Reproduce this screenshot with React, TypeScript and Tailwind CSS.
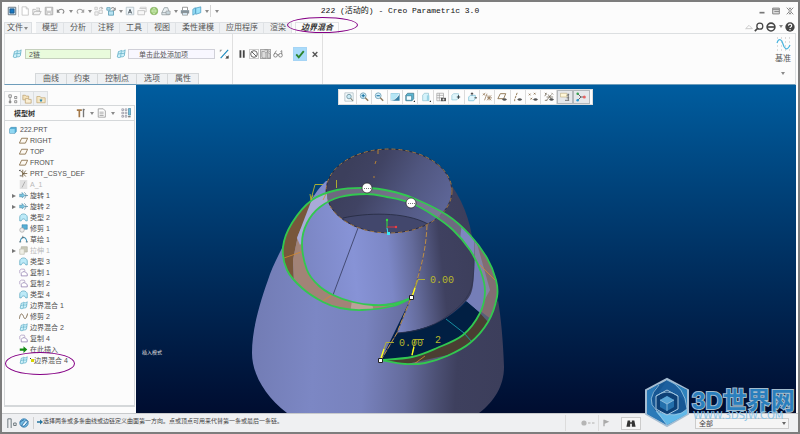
import type { ReactNode } from "react";

type Point = [number, number];

interface TreeNode {
    icon: string;
    label: string;
    expandable?: boolean;
    disabled?: boolean;
    marker?: boolean;
}

const ribbonTabs = ["模型", "分析", "注释", "工具", "视图", "柔性建模", "应用程序", "渲染"];
const panelTabs = ["曲线", "约束", "控制点", "选项", "属性"];

const treeNodes: TreeNode[] = [
    { icon: "plane", label: "RIGHT" },
    { icon: "plane", label: "TOP" },
    { icon: "plane", label: "FRONT" },
    { icon: "csys", label: "PRT_CSYS_DEF" },
    { icon: "axis", label: "A_1", disabled: true },
    { icon: "revolve", label: "旋转 1", expandable: true },
    { icon: "revolve", label: "旋转 2", expandable: true },
    { icon: "quilt", label: "类型 2" },
    { icon: "trim", label: "修剪 1" },
    { icon: "sketch", label: "草绘 1" },
    { icon: "extrude", label: "拉伸 1", expandable: true, disabled: true },
    { icon: "quilt", label: "类型 3" },
    { icon: "copy", label: "复制 1" },
    { icon: "copy", label: "复制 2" },
    { icon: "quilt", label: "类型 4" },
    { icon: "blend", label: "边界混合 1" },
    { icon: "curve", label: "修剪 2" },
    { icon: "blend", label: "边界混合 2" },
    { icon: "copy", label: "复制 4" },
    { icon: "insert", label: "在此插入" },
    { icon: "blend", label: "边界混合 4", marker: true },
];

// every glyph is drawn on a 12 x 12 grid
const glyphs: Record<string, ReactNode> = {
    app: <><path d="M1.500 1.500h9v9h-9z" fill="#cfe8f7" stroke="#5a6570" /><path d="M3.500 3.500h5v5h-5z" fill="#1978c2" stroke="#164e80" /></>,
    new: <path d="M2.500 1h5l2.500 2.500V11h-7.500zM7.500 1v2.500H10" fill="#fff" stroke="#c2c2c2" />,
    open: <><path d="M1 10.500V4h3l1 1h4v2M1 10.500l2-4h8l-2 4z" fill="#f4f4f4" stroke="#b5b5b5" /><path d="M5 2.500h4v2" stroke="#b5b5b5" /></>,
    save: <><path d="M1.500 1.500h9v9h-9z" fill="#d9d9d9" stroke="#a8a8a8" /><path d="M3 2h6v4H3zM4 8h4v2.500H4z" fill="#fff" stroke="#b0b0b0" strokeWidth=".6" /></>,
    undo: <><path d="M2.500 6C4 3 9 3 9.500 6.500c0 1.500-.8 2-1.500 2.500" stroke="#888" strokeWidth="1.300" /><path d="M1 3.500V8h4z" fill="#888" /></>,
    redo: <><path d="M9.500 6C8 3 3 3 2.500 6.500c0 1.500.8 2 1.500 2.500" stroke="#a5a5a5" strokeWidth="1.300" /><path d="M11 3.500V8H7z" fill="#a5a5a5" /></>,
    regen: <><path d="M1 1.500h3v3H1zM1 7h4v4H1zM6 5h4v4H6z" fill="#f2f2f2" stroke="#c5c5c5" /><path d="M6 3c2-2 4-1 4 0M9 1l1.500 2-2 .5" stroke="#aaa" /></>,
    regenBlue: <><path d="M1 2h4v3H1zM3 6h6v5H3z" fill="#b9e2f2" stroke="#5c9db5" /><path d="M6 3c2-2 4-1 4.500 1M11 2v3H8" stroke="#666" /></>,
    annot: <><path d="M1.500 1.500h9v9h-9z" fill="#eef5f9" stroke="#b5c2c9" /><path d="M4 9l2-5 2 5M5 7.500h2" stroke="#36424a" /></>,
    windows: <><path d="M3 3h8v4H9M1 5.500h8v5H1z" fill="#f7f7f7" stroke="#c2c2c2" /><path d="M4 3V1.500h7V3" stroke="#ccc" /></>,
    globe: <><circle cx="6" cy="6" r="4.500" fill="#9ccc74" stroke="#85ae62" /><path d="M2 6h8M6 2c-2 2-2 6 0 8M6 2c2 2 2 6 0 8" stroke="#dff3cf" strokeWidth=".7" /></>,
    stack: <><path d="M1 8l3-6h4l2 6zM1 8v2.500h9V8" fill="#eaf1f3" stroke="#939ca0" /><path d="M6 6h5v4H6z" fill="#c7d6dc" stroke="#888" strokeWidth=".6" /></>,
    print: <><path d="M3 5V1.500h6V5" fill="#fff" stroke="#888" /><path d="M1 5h10v4H1z" fill="#84929a" /><path d="M3 8h6v3H3z" fill="#dceffa" stroke="#777" strokeWidth=".7" /></>,
    model: <path d="M1 4l3-2v7l-3 2zM4.500 2.500L10.500 1v7l-6 2z" fill="#9be2fa" stroke="#3c93bb" strokeWidth=".8" />,
    blend: <><path d="M3 3c2 0 3-2 4-1s3 0 4-1l-1 7c-1 2-3 1-4 1.500S3 11 1.500 9.500z" fill="#cdf0f9" stroke="#57a9c3" strokeWidth=".9" /><path d="M2.500 6c2 0 3-1 4-.6s3 0 4-.6M6.500 2L5.500 9.500" stroke="#57a9c3" strokeWidth=".8" /></>,
    flip: <><path d="M2 11L11 1" stroke="#1687bd" strokeWidth="1.300" /><path d="M1 1h3L1 4z" fill="#999" /><path d="M11.500 7.500v4h-4z" fill="#222" /><path d="M8 8l3 3" stroke="#555" strokeWidth=".8" /></>,
    pause: <path d="M3 1.500h2.200v9H3zM7 1.500h2.200v9H7z" fill="#444" />,
    block: <><circle cx="6" cy="6" r="4" stroke="#666" strokeWidth="1.200" /><path d="M3 3l6 6" stroke="#666" strokeWidth="1.200" /></>,
    mesh: <path d="M1 9V3h3l2 2v6H2zM4 1h4v3M8 4l3 2v5H8zM6 5L9 2l2 2" stroke="#888" strokeWidth=".8" />,
    glasses: <><circle cx="3" cy="7.500" r="2.200" stroke="#777" /><circle cx="9" cy="7.500" r="2.200" stroke="#777" /><path d="M5 7h2M1.500 6L4 2M10.500 6V2L9 3" stroke="#777" /></>,
    check: <path d="M1.500 6.500L4.500 10 10.500 2.500" stroke="#2c852c" strokeWidth="2.200" />,
    cross: <path d="M2.500 3l7 7M9.500 3l-7 7" stroke="#555" strokeWidth="2" />,
    plane: <path d="M3.500 3h8l-3 6.500h-8z" fill="#fdf9f2" stroke="#8d7450" strokeWidth="1.200" />,
    csys: <><path d="M2 2l7 8M9 2l-6 8M5 1v10M5 6h6" stroke="#705d3e" strokeWidth="1.100" /><path d="M0 1l2 2M0 3l2-2M1 9h2" stroke="#444" /></>,
    axis: <><path d="M1 0h10v12H1z" fill="#e2e2e2" /><path d="M4 10l4-8" stroke="#aaa" strokeWidth="1.200" /></>,
    revolve: <><path d="M1 4l3 1V2l4 4-4 3V7L1 8z" fill="#7cc8e4" stroke="#4a8dab" strokeWidth=".8" /><path d="M7 2c3 1 3 6 0 8M8 6h4" stroke="#5a8ba0" /></>,
    quilt: <path d="M1 10.500V5C2 0 10 0 11 5v5.500H9C8 7 4 7 3 10.500z" fill="#bdeaf8" stroke="#519fbb" strokeWidth=".9" />,
    trim: <><path d="M4 1h7v6H4z" fill="#57afd5" stroke="#2b7fa7" strokeWidth=".7" /><circle cx="4" cy="8" r="3" fill="#eee" stroke="#999" strokeWidth=".8" /></>,
    sketch: <><path d="M1.500 10C2 1 10 1 10.500 10" stroke="#3d93ba" strokeWidth="1.400" /><path d="M0 9h3M9 9h3M4 3h3M5 1v4" stroke="#666" strokeWidth=".8" /></>,
    extrude: <><path d="M3 1h8v7H3z" fill="#c9c9b8" stroke="#b4b4a6" /><path d="M1 4h6v7H1z" fill="#efefe6" stroke="#c0c0b4" /></>,
    copy: <><path d="M1 7V3l2-1.500h4L8 4" stroke="#ab9bc2" /><path d="M3 10.500V7l2-2h3l3 2.500v3z" fill="#fff" stroke="#8c79ab" /></>,
    curve: <path d="M.5 9C2-1 5 3 6 6s3 6 5.500-4" stroke="#806b50" strokeWidth="1.300" />,
    insert: <path d="M1 4.500h5V1.500L11 6 6 10.500v-3H1z" fill="#138a13" />,
    part: <><path d="M1 4l2-2h8v6l-2 3H1z" fill="#55aed6" stroke="#277ba6" strokeWidth=".7" /><path d="M1.500 4.500h7v6h-7z" fill="#90d7f2" /></>,
    treeTab: <path d="M1 1h3v3H1zM8 3h2.500v2.500H8zM8 8h2.500v2.500H8zM2.500 4v7M1.500 8.500h2v2h-2z" stroke="#666" strokeWidth=".8" />,
    folders: <><path d="M1 3V1.500h3l1 1h3V7H1z" fill="#f4e2bc" stroke="#b89c68" strokeWidth=".8" /><path d="M4 5.500h3l1 1h3V11H4z" fill="#faefd5" stroke="#b89c68" strokeWidth=".8" /></>,
    favorite: <><path d="M1 10.500V3h4l1 1.500h5v6z" fill="#f6e7c5" stroke="#c0a46d" strokeWidth=".8" /><path d="M6 5.500l.7 1.300 1.300.2-1 1 .2 1.400L6 8.800l-1.200.6L5 8 4 7l1.300-.2z" fill="#2485b1" /></>,
    tools: <><path d="M1 1.500h6v2H5V11H3V3.500H1z" fill="#a37848" /><path d="M9 1v10M8 2h2.500" stroke="#777" strokeWidth="1.600" /></>,
    list: <><path d="M1.500 1h6L10 3.500V11H1.500z" fill="#fff" stroke="#999" /><path d="M3 5h5M3 7h5M3 9h5" stroke="#888" strokeWidth=".8" /></>,
    columns: <><path d="M1 1h2v2H1zM1 5h2v2H1zM1 9h2v2H1zM5 1h2v2H5zM5 5h2v2H5zM5 9h2v2H5z" stroke="#778" strokeWidth=".7" /><path d="M9 .5h2.500v8H9z" fill="#75bfdd" stroke="#377791" strokeWidth=".7" /><path d="M8.500 10.500h3" stroke="#333" /></>,
    fit: <><path d="M1 1h10v10H1z" fill="#f4fafc" stroke="#99abb2" strokeWidth=".7" /><circle cx="6" cy="5.500" r="2.700" fill="#cbeaf5" stroke="#6d909d" /><path d="M8 7.500l2.500 3" stroke="#776" strokeWidth="1.300" /></>,
    zoomIn: <><circle cx="5" cy="4.500" r="3.500" fill="#d6effa" stroke="#6d9fb5" /><path d="M3 4.500h4M5 2.500v4" stroke="#08699c" strokeWidth="1.200" /><path d="M7.500 7L11 10.500" stroke="#8c7a5e" strokeWidth="1.700" /></>,
    zoomOut: <><circle cx="5" cy="4.500" r="3.500" fill="#d6effa" stroke="#6d9fb5" /><path d="M3 4.500h4" stroke="#08699c" strokeWidth="1.200" /><path d="M7.500 7L11 10.500" stroke="#8c7a5e" strokeWidth="1.700" /></>,
    repaint: <><path d="M1 1.500h10.500v9H1z" fill="#3580a5" /><path d="M1 1.500h10.500C10 6 6 9 1 10z" fill="#b4e6f5" /><path d="M1 10c4 0 8-3 10-8" stroke="#fff" /></>,
    shade: <><path d="M1 4l2-2.500h7.500V8l-2 2.500H1z" fill="#5eb6d2" stroke="#3a6e81" strokeWidth=".8" /><path d="M1.500 4.500h6.500v5.500H1.500z" fill="#f1fcff" stroke="#2b7793" strokeWidth=".8" /><path d="M12 10v2h-2z" fill="#222" /></>,
    saved: <><path d="M2 4l2-2.500h5V8l-2 2.500H2z" fill="#d5f3fb" stroke="#8cbccb" strokeWidth=".8" /><path d="M7 4h3v7H7z" fill="#9ad4e5" /><path d="M12 10v2h-2z" fill="#222" /></>,
    views: <><path d="M1 1.500h8v9H1zM1 4h8M1 7h8M4 1.500v9" fill="#fff" stroke="#999" strokeWidth=".8" /><path d="M6 7h6v4H6z" fill="#555" /><circle cx="9" cy="9" r="1.100" fill="#ddd" /></>,
    box: <><path d="M1 4l2-2h6v5L7 9.500H1z" fill="#dff5fb" stroke="#8fc4d3" strokeWidth=".8" /><path d="M7 6h4M9 4v4" stroke="#36454b" strokeWidth="1.300" /></>,
    boxUp: <><path d="M2 6l2-2h6v4L8 10.500H2z" fill="#dff5fb" stroke="#6ab7d0" strokeWidth=".8" /><path d="M6 1v3M4.500 2.500L6 1l1.500 1.500M9 7h3" stroke="#333" strokeWidth="1.100" /></>,
    datum: <path d="M1 2l3 2M4 1L1 4M3 10l3-8M6 4l5 6M11 4l-5 6M6 7h6M8.500 4v6" stroke="#937856" strokeWidth=".9" />,
    planeEye: <><path d="M4 2h6.500L8 8H1z" stroke="#8d7450" strokeWidth="1.100" /><path d="M6 9q3-3 6 0-3 3-6 0z" fill="#555" /></>,
    axisEye: <><path d="M5 1L2 9M2 9v2" stroke="#8d7450" strokeWidth="1.100" strokeDasharray="3 1" /><path d="M5 9q3-3 6 0-3 3-6 0z" fill="#555" /></>,
    pointEye: <><path d="M1 2l2 2M3 2L1 4M7 1l2 2M9 1L7 3M3 7l2 2M5 7L3 9" stroke="#8d7450" /><path d="M6 9q3-3 6 0-3 3-6 0z" fill="#555" /></>,
    csysEye: <><path d="M1 1l2 2M3 1L1 5M5 3l4 6M9 3L3 10M3 6h8M9 1l2 2M1 10h3" stroke="#6d6353" strokeWidth=".9" /><path d="M6 9q3-3 6 0-3 3-6 0z" fill="#555" /></>,
    note: <><path d="M.5 1.500h8v4.500h-8z" fill="#fff7d8" stroke="#baa978" strokeWidth=".7" /><path d="M10 2v8M8 4l3-1M8 7h3M6 10h5" stroke="#666" /></>,
    spin: <><path d="M2 2l4 4-4 4M6 6h4" stroke="#666" strokeWidth="1.200" /><circle cx="2" cy="2" r="1.500" fill="#36a04e" /><circle cx="2" cy="10" r="1.500" fill="#2a9ad1" /><circle cx="10" cy="6" r="1.800" fill="#e86262" /></>,
    minimize: <path d="M3 8h6" stroke="#777" strokeWidth="2" />,
    maximize: <path d="M2 2.500h8v7H2zM2 4h8M4 6.500h6" fill="#ddd" stroke="#888" strokeWidth="1.200" />,
    close: <path d="M2 2l3 3v2l-3 3M10 2L7 5v2l3 3M5 2l1 2 1-2M5 10l1-2 1 2" stroke="#888" strokeWidth="1.200" />,
    collapse: <path d="M2 8l4-4 4 4z" fill="#fff" stroke="#aaa" />,
    search: <><circle cx="7" cy="5" r="3.600" stroke="#444" strokeWidth="1.500" /><path d="M4.500 7.500L1 11" stroke="#444" strokeWidth="2" /></>,
    ptc: <><circle cx="6" cy="6" r="4.700" stroke="#444" strokeWidth="1.900" /><path d="M2 6h8" stroke="#444" strokeWidth="2" /></>,
    help: <><circle cx="6" cy="6" r="5.600" fill="#444" /><path d="M4.200 4.500C4.200 2 8 2 8 4.400 8 6 6 5.800 6 7.300M6 8.500V10" stroke="#fff" strokeWidth="1.400" /></>,
    browser: <><circle cx="6" cy="6" r="5" fill="#75bce5" stroke="#347aac" /><path d="M3 9l5-6 3 1-5 6zM1 5l5-3" fill="#e1f5ff" stroke="#2b699a" /></>,
    panel: <path d="M1 1v11M5 1v11M1 1h4M8 6h3v3H8z" stroke="#707b80" strokeWidth="1.200" />,
    arrow: <path d="M0 4.500h6V1l6 5-6 5V7.500H0z" fill="#27749e" />,
    flag: <path d="M2 11V1h2l7 3-7 3v4z" fill="#aaa" />,
    binoculars: <path d="M2 3h3v2h2V3h3l1.500 7.500H7V7H5v3.500H.5z" fill="#333" />,
};

const Glyph = ({ name, className = "size-[10px]" }: { name: string; className?: string }) => (
    <svg viewBox="0 0 12 12" fill="none" aria-hidden="true" className={`shrink-0 ${className}`}>
        {glyphs[name]}
    </svg>
);

const Caret = ({ className = "w-[7px]" }: { className?: string }) => (
    <button aria-label="更多" className={`flex shrink-0 items-center justify-center ${className}`}>
        <svg viewBox="0 0 4 3" className="h-[3px] w-1"><path d="M0 0h4L2 3z" fill="#8a8a8a" /></svg>
    </button>
);

const ToolButton = ({ name, className = "w-3" }: { name: string; className?: string }) => (
    <button aria-label={name} className={`flex shrink-0 items-center justify-center ${className}`}>
        <Glyph name={name} />
    </button>
);

const quickAccess = [
    "app", "|", "new", "open", "save", "undo", "v", "redo", "v", "regen", "regenBlue", "v",
    "annot", "windows", "globe", "stack", "v", "print", "model", "v", "|",
];

const TitleBar = () => (
    <header className="relative flex h-[18px] items-center justify-between">
        <div className="flex h-full items-center pl-1">
            {quickAccess.map((item, i) => {
                if (item === "|") return <span key={i} className="h-3 w-px bg-[#d5d5d5]" />;
                if (item === "v") return <Caret key={i} />;
                return <ToolButton key={i} name={item} />;
            })}
            <Caret className="w-3" />
        </div>
        <h1 className="pointer-events-none absolute inset-x-0 text-center font-['Liberation_Mono','Noto_Sans_CJK_SC',monospace] text-[8px] leading-[16px] text-[#111]">
            222 (活动的) - Creo Parametric 3.0
        </h1>
        <div className="flex gap-1 pr-[3px]">
            <ToolButton name="minimize" className="w-[10px]" />
            <ToolButton name="maximize" className="w-[10px]" />
            <ToolButton name="close" className="w-[10px]" />
        </div>
    </header>
);

const RibbonTabs = () => (
    <nav className="flex h-[13px] items-end justify-between pl-[2px]">
        <div className="flex h-[11px] items-stretch text-[8px] leading-[10px] text-[#555]">
            <button className="mr-1 flex w-7 items-center justify-center border border-b-0 border-[#dcdfe2] bg-[#eff1f3]">
                文件<Caret className="w-[6px]" />
            </button>
            {ribbonTabs.map(tab => (
                <button key={tab} className="border-r border-t border-[#dfe2e5] bg-[#eff1f3] pl-[6px] pr-[5px]">{tab}</button>
            ))}
            <div className="relative ml-[3px] flex">
                <button className="w-11 border-x border-t border-[#e1e3e5] bg-[#fcfcfc] font-bold italic text-[#333]">边界混合</button>
                <span className="pointer-events-none absolute -left-2 -top-[5px] h-4 w-[71px] rounded-[50%] border border-[#850085]" />
            </div>
        </div>
        <div className="flex h-full items-center pr-[2px]">
            <ToolButton name="collapse" className="w-[9px] opacity-70" />
            <ToolButton name="search" />
            <ToolButton name="ptc" />
            <Caret />
            <ToolButton name="help" />
        </div>
    </nav>
);

const Dashboard = () => (
    <section className="mx-[2px] flex h-[52px] justify-between border border-[#dcdfe1] border-b-[#6e9dbb] text-[8px] leading-[10px] text-[#555]">
        <div className="flex">
            <div className="flex flex-col justify-between border-r border-[#e0e0e0] pl-[6px] pt-[13px]">
                <div className="flex h-[14px] items-center pr-[2px]">
                    <ToolButton name="blend" />
                    <input aria-label="第一方向曲线" defaultValue="2链" className="ml-[2px] h-[10px] w-[86px] border border-[#c5d0bd] bg-[#e9fbdc] px-[3px] text-[7px] leading-[8px]" />
                    <ToolButton name="blend" className="ml-1 w-3" />
                    <input aria-label="第二方向曲线" defaultValue="单击此处添加项" className="ml-px h-[10px] w-[87px] border border-[#d0d0d8] bg-[#f8f7ff] pl-[10px] text-[7px] leading-[8px]" />
                    <ToolButton name="flip" className="ml-[3px] w-3" />
                </div>
                <div className="ml-6 flex h-[11px]">
                    {panelTabs.map((tab, i) => (
                        <button key={tab} className={`border-r border-t border-[#d5d8da] bg-[#eff1f3] px-[7px] ${i === 0 ? "border-l" : ""}`}>{tab}</button>
                    ))}
                </div>
            </div>
            <div className="flex items-start border-r border-[#e0e0e0] pl-[3px] pr-[3px] pt-[13px]">
                <div className="flex h-[14px] items-center">
                    <ToolButton name="pause" />
                    <ToolButton name="block" className="ml-px h-[10px] w-[10px] border border-[#ccc]" />
                    <ToolButton name="mesh" className="ml-px h-[10px] w-[11px] border border-[#aaa] bg-[#ddd]" />
                    <ToolButton name="glasses" className="ml-px w-3" />
                    <button aria-label="确定" className="ml-[9px] flex size-[14px] items-center justify-center border border-[#a5d4f5] bg-[#a9dbfa]">
                        <Glyph name="check" />
                    </button>
                    <button aria-label="取消" className="ml-1 flex w-2 justify-center"><Glyph name="cross" className="size-2" /></button>
                </div>
            </div>
        </div>
        <button className="mr-[3px] flex w-[18px] flex-col items-center pt-[3px]">
            <svg viewBox="0 0 15 14" fill="none" className="h-[14px] w-[15px]">
                <path d="M1 1h14M1 5h14M1 9h14M1 13h14" stroke="#bbb" strokeDasharray="1 3" />
                <path d="M1 6C3 0 6 3 7 7s4 8 7 1" stroke="#4ab5df" strokeWidth="1.200" />
            </svg>
            <span className="mt-[3px]">基准</span>
            <svg viewBox="0 0 4 3" className="mt-2 h-[3px] w-1"><path d="M0 0h4L2 3z" fill="#8a8a8a" /></svg>
        </button>
    </section>
);

const ModelTree = () => (
    <aside className="flex w-[132px] shrink-0 flex-col pb-[6px] pt-[6px]">
        <div className="flex h-[14px] shrink-0">
            <ToolButton name="treeTab" className="w-4 border-l border-t border-[#dcdfe1]" />
            <ToolButton name="folders" className="w-[14px] border border-b-0 border-[#dcdfe1] bg-[#eff1f3]" />
            <ToolButton name="favorite" className="w-[14px] border border-b-0 border-l-0 border-[#dcdfe1] bg-[#eff1f3]" />
        </div>
        <div className="mr-px flex grow flex-col border-x border-b-2 border-t border-[#d5d8da]">
            <div className="flex h-[15px] shrink-0 items-center justify-between border-b border-[#d5d8da] pl-[9px] pr-[2px]">
                <h2 className="text-[7px] font-bold leading-[11px] text-[#333]">模型树</h2>
                <div className="flex items-center">
                    <ToolButton name="tools" /><Caret className="w-[9px]" />
                    <ToolButton name="list" /><Caret className="w-[9px]" />
                    <ToolButton name="columns" className="ml-[3px] w-3" />
                </div>
            </div>
            <ul className="pt-[3px] text-[7px] leading-[11px] text-[#4f4f4f]">
                <li className="flex h-[11px] items-center gap-[3px] pl-1">
                    <Glyph name="part" className="size-2" />222.PRT
                </li>
                {treeNodes.map(node => (
                    <li key={node.label} className={`relative flex h-[11px] items-center pl-[7px] ${node.disabled ? "text-[#b9b9b9]" : ""}`}>
                        <span className="flex w-[7px]">
                            {node.expandable && <svg viewBox="0 0 4 4" className="size-1"><path d="M0 0l4 2-4 2z" fill="#777" /></svg>}
                        </span>
                        <Glyph name={node.icon} className="mr-[2px] size-[9px]" />
                        {node.marker && (
                            <svg viewBox="0 0 4 6" className="h-[6px] w-1"><path d="M1 1h3v3H1z" fill="#d6d600" /><path d="M0 0h1v1H0z" fill="#333" /></svg>
                        )}
                        {node.label}
                        {node.marker && <span className="pointer-events-none absolute -top-[3px] left-0 h-[23px] w-[70px] rounded-[50%] border border-[#850085]" />}
                    </li>
                ))}
            </ul>
        </div>
    </aside>
);

const viewTools = [
    "fit", "zoomIn", "zoomOut", "repaint", "shade", "saved", "views", "box",
    "boxUp", "datum", "planeEye", "axisEye", "pointEye", "csysEye", "note", "spin",
];

// Catmull-Rom through the points, written as cubic segments
const spline = (pts: Point[]) => {
    let d = `M${pts[0][0]} ${pts[0][1]}`;
    for (let i = 0; i < pts.length - 1; i++) {
        const a = pts[i - 1] ?? pts[i];
        const b = pts[i];
        const c = pts[i + 1];
        const e = pts[i + 2] ?? c;
        d += `C${b[0] + (c[0] - a[0]) / 6} ${b[1] + (c[1] - a[1]) / 6} ${c[0] - (e[0] - b[0]) / 6} ${c[1] - (e[1] - b[1]) / 6} ${c[0]} ${c[1]}`;
    }
    return d;
};

const outerChain: Point[] = [
    [411, 298], [393, 306], [362, 310], [340, 308], [323, 302], [302, 288], [287, 270], [283, 247], [292, 223], [312, 200],
    [337, 190], [367, 188], [390, 191], [413, 198], [447, 215], [470, 235], [487, 258], [496, 280],
    [497, 297], [488, 322], [470, 343], [447, 356], [425, 363], [405, 364], [381, 360],
];
const innerChain: Point[] = [
    [411, 298], [393, 304], [373, 305], [353, 302], [333, 295], [318, 285], [307, 270], [302, 243], [307, 223], [320, 207],
    [340, 197], [367, 194], [387, 197], [411, 203], [433, 215], [453, 230], [470, 250], [481, 272],
    [485, 292], [480, 313], [463, 335], [437, 348], [412, 357], [381, 360],
];
const outerPath = spline(outerChain);
const innerPath = spline(innerChain);
const bandPath = outerPath + spline([...innerChain].reverse()).replace("M", "L") + "Z";

const Scene = () => (
    <svg viewBox="136 85 660 328" preserveAspectRatio="xMidYMid slice" fill="none" className="absolute inset-0 h-full w-full">
        <defs>
            <linearGradient id="body" gradientUnits="userSpaceOnUse" x1="252" y1="330" x2="504" y2="345">
                <stop offset="0" stopColor="#727cb4" />
                <stop offset=".25" stopColor="#7c87c4" />
                <stop offset=".45" stopColor="#7882bd" />
                <stop offset=".62" stopColor="#646b9c" />
                <stop offset=".74" stopColor="#4c5074" />
                <stop offset=".82" stopColor="#3e405e" />
                <stop offset="1" stopColor="#3c3e5b" />
            </linearGradient>
            <linearGradient id="cone" gradientUnits="userSpaceOnUse" x1="300" y1="250" x2="474" y2="232">
                <stop offset="0" stopColor="#7a85c2" />
                <stop offset=".3" stopColor="#8793d6" />
                <stop offset=".5" stopColor="#7c87c6" />
                <stop offset=".64" stopColor="#646b9b" />
                <stop offset=".8" stopColor="#3f4160" />
                <stop offset="1" stopColor="#3c3e5b" />
            </linearGradient>
            <linearGradient id="bore" gradientUnits="userSpaceOnUse" x1="350" y1="165" x2="440" y2="215">
                <stop offset="0" stopColor="#3c3f5c" />
                <stop offset=".25" stopColor="#404363" />
                <stop offset=".6" stopColor="#50567f" />
                <stop offset="1" stopColor="#5d6596" />
            </linearGradient>
            <clipPath id="band"><path d={bandPath} /></clipPath>
        </defs>

        <path d="M283 246C276 260 271 270 268 280C258 308 252 332 252 353C252 374 265 396 287 413H479C494 402 504 386 504 367C503 340 501 318 498 300L488 322L470 343L447 356L425 363L381 360L411 298L380 240Z" fill="url(#body)" />
        <path d="M455 212L470 235L487 258L496 280L480 313L466 301L470 262Z" fill="#757eb8" />
        <path d="M326 181C317 190 312 198 307 208C300 222 294 243 295 265L333 303L373 307L411 298L397 333C425 331 449 320 466 301C473 294 474 286 474 260C474 232 466 206 452 186Z" fill="url(#cone)" />
        <path d="M397 333C425 331 449 320 467 302L480 313C472 332 452 343 437 348C418 356 400 359 381 360Z" fill="#011f43" />
        <path d="M474 240C474 250 475 262 473 278C472 294 464 305 440 321C425 330 409 332 397 333" stroke="#30344f" strokeWidth=".8" />

        <ellipse cx="389" cy="191" rx="63" ry="42" fill="url(#bore)" />
        <path d="M343 218C365 213 404 211 428 224C406 236 366 236 343 218Z" fill="#42476c" />
        <path d="M343 218C365 213 404 211 428 224" stroke="#252940" strokeWidth=".8" />
        <ellipse cx="389" cy="191" rx="63" ry="42" stroke="#242331" strokeWidth=".8" />
        <ellipse cx="389" cy="191" rx="63" ry="42" stroke="#c08b48" strokeWidth=".8" strokeDasharray="4 3" />
        <path d="M378 150v4M376 161l-1 3M374 176v2" stroke="#b58235" />

        <g clipPath="url(#band)">
            <path d="M280 180H500V370H280Z" fill="#8f8798" fillOpacity=".6" />
            <path d="M462 222L474 240V262L460 240Z" fill="#7f86c0" />
            <path d="M325 180L298 235L293 260L294 285L275 290V195Z" fill="#78573b" />
            <path d="M298 235L293 260L294 282L330 312L415 312V290L330 285L308 250Z" fill="#a28377" />
            <path d="M312 199L326 181L328 210L300 245L297 238Z" fill="#a9abd8" />
            <path d="M352 300L370 298L375 314L350 314Z" fill="#cbb6b0" fillOpacity=".6" />
            <path d="M476 240L505 275V330L479 310L490 290Z" fill="#826d72" />
            <path d="M479 312L489 323L470 350L380 370V355Z" fill="#4a3e32" />
        </g>
        <path d="M358 228L333 295" stroke="#343a5c" strokeWidth=".8" />
        <path d="M427 225C426 250 421 270 411 298L397 333L381 360" stroke="#5a5268" strokeWidth=".9" />
        <path d="M427 225C426 250 421 270 411 298L397 333L381 360" stroke="#c79545" strokeWidth=".9" strokeDasharray="5 2" />
        <path d="M284 258l17-6M323 301l10-7M414 364l11-8M479 264l16 16M326 194l-3 6" stroke="#d58a2c" strokeWidth=".8" />
        <path d="M446 319l18 14 8 9" stroke="#1898aa" strokeWidth=".9" />
        <path d={outerPath} stroke="#32c850" strokeWidth="1.800" />
        <path d={innerPath} stroke="#32c850" strokeWidth="1.800" />

        <path d="M323 184.500h-8l-4 15M310 194l1 6 2-5M336.500 180v8M425 279.500h-7l-5 14M394 342.500h-8l-5 16M424 339.500h-9l-3 16" stroke="#b8b82c" strokeWidth=".9" />
        <path d="M415 288l-3 9M384 349l-3 9M414 347l-2 8" stroke="#ffff20" strokeWidth="1.300" />
        <g fill="#b8b82c" fontSize="10" fontFamily="'Liberation Mono', monospace">
            <text x="430" y="283">0.00</text>
            <text x="399" y="346">0.00</text>
            <text x="435" y="343">2</text>
        </g>

        <path d="M387 228v-8" stroke="#33e03c" />
        <path d="M387 227h9" stroke="#dc3545" />
        <path d="M387 228l1 6" stroke="#3ce0ef" />
        <circle cx="387" cy="220" r="1.200" fill="#33e03c" />
        <circle cx="396" cy="227" r="1.200" fill="#f04040" />
        <path d="M387 232h3v3h-3z" fill="#3ce8f8" />
        <circle cx="367" cy="188" r="5" fill="#fff" stroke="#222" strokeWidth=".7" />
        <circle cx="411" cy="203" r="5" fill="#fff" stroke="#222" strokeWidth=".7" />
        <path d="M364 188.500h7M408 203.500h7" stroke="#777" strokeDasharray="1 1" />
        <path d="M409.500 295.500h4v4h-4zM378.500 358.500h4v4h-4z" fill="#fff" stroke="#222" />
    </svg>
);

const Viewport = () => (
    <main className="relative min-h-[300px] grow overflow-hidden bg-linear-to-b from-[#005d9f] to-[#000d30]">
        <Scene />
        <div className="absolute left-0 right-0 top-1 flex justify-center">
            <div role="toolbar" className="mr-[2px] flex h-4 w-[255px] border border-[#ddd] bg-[#fdfdfd] pl-[3px] pr-[2px]">
                {viewTools.map((tool, i) => (
                    <ToolButton key={tool} name={tool} className={`flex-1 ${i > 13 ? "border border-[#b4b8bc] bg-[#e6e8eb]" : "border-r border-[#dcdcdc]"}`} />
                ))}
            </div>
        </div>
        <p className="absolute bottom-[55px] left-[6px] text-[5px] leading-[12px] text-[#ddd]">插入模式</p>
    </main>
);

const StatusBar = () => (
    <footer className="flex h-[19px] items-center justify-between border-t border-[#c8cacc] bg-[#eff0f2] pl-1">
        <div className="flex items-center">
            <ToolButton name="panel" />
            <ToolButton name="browser" />
            <span className="mx-[3px] h-3 w-px bg-[#d0d0d0]" />
            <p className="mb-[3px] flex items-center text-[6px] leading-[9px] text-[#444]">
                <Glyph name="arrow" className="size-[6px]" />
                选择两条或多条曲线或边链定义曲面第一方向。点或顶点可用来代替第一条或最后一条链。
            </p>
        </div>
        <div className="flex items-center pr-[9px]">
            <span className="mr-[15px] h-4 w-px bg-[#dcdcdc]" />
            <svg viewBox="0 0 14 6" className="h-[6px] w-[14px]"><circle cx="3" cy="3" r="2.600" fill="#b5b5b5" /><path d="M7 2h2.500v2H7zM11 2h2.500v2H11z" fill="#d0d0d0" /></svg>
            <span className="mx-[3px] h-4 w-px bg-[#dcdcdc]" />
            <Glyph name="flag" className="size-2" />
            <button aria-label="查找" className="ml-[11px] flex h-[13px] w-5 items-center justify-center border border-[#ccc] bg-[#f7f7f7]"><Glyph name="binoculars" /></button>
            <div className="relative ml-[54px]">
                <select aria-label="过滤器" className="block h-[11px] w-[94px] appearance-none border border-[#ccc] bg-[#f5f5f5] pl-[3px] text-[7px] leading-[9px] text-[#444]">
                    <option>全部</option>
                </select>
                <svg viewBox="0 0 4 3" className="pointer-events-none absolute right-[3px] top-1 h-[3px] w-1"><path d="M0 0h4L2 3z" fill="#666" /></svg>
            </div>
        </div>
    </footer>
);

const Watermark = () => (
    <svg viewBox="0 0 154 50" fill="none" className="pointer-events-none absolute bottom-[5px] right-[2px] h-[50px] w-[154px]">
        <g transform="translate(3 1)">
            <path d="M22 1L43 12V36L22 48L1 36V12Z" fill="#1a5f9f" fillOpacity=".9" stroke="#a5bdd2" strokeWidth="2" />
            <path d="M22 2L42 12V31C40 24 37 19 32 17L14 14Z" fill="#1c5f9e" />
            <path d="M22 2L42 12V31C40 15 33 7 22 2Z" fill="#2f83bd" />
            <path d="M42 31V36L22 47L10 33C20 38 34 38 42 31Z" fill="#62b9e8" />
            <path d="M2 31V13L14 6C6 14 4 24 11 34L22 47L2 36Z" fill="#2a7ab8" />
            <path d="M22 12L33 18V31L22 37L11 31V18Z" fill="#0d4076" stroke="#a9c9e1" />
            <path d="M22 18L29 22V29L22 33L15 29V22Z" fill="#2470ac" />
            <path d="M15 22L22 18L29 22L22 26Z" fill="#5aa5d6" />
            <path d="M15 22L22 26L29 22M22 26V33" stroke="#9bc4e0" strokeWidth=".8" />
            <path d="M14 7Q0 22 11 32L22 47M11 33Q32 42 42 31M22 2Q40 8 42 31M33 18Q22 10 11 18" stroke="#9bc4e0" strokeWidth=".8" />
        </g>
        <g fontFamily="'Liberation Sans', 'Noto Sans CJK SC', sans-serif" fontSize="24" fontWeight="700">
            <text x="50" y="32" fill="#2a7fbd" stroke="#a3bccd" strokeWidth="2" paintOrder="stroke">3D世界网</text>
        </g>
        <text x="51" y="42" fontSize="10" fill="#8cc4e6" fontFamily="'DejaVu Sans', sans-serif">WWW.3DSJW.COM</text>
    </svg>
);

const App = () => {
    return (
        <div className="relative flex min-h-screen w-full flex-col border-2 border-[#7d7d7d] bg-[#fcfcfc] font-['Liberation_Sans','Noto_Sans_CJK_SC',sans-serif]">
            <TitleBar />
            <RibbonTabs />
            <Dashboard />
            <div className="flex grow px-[2px]">
                <ModelTree />
                <Viewport />
            </div>
            <StatusBar />
            <Watermark />
        </div>
    );
};

export default App;
